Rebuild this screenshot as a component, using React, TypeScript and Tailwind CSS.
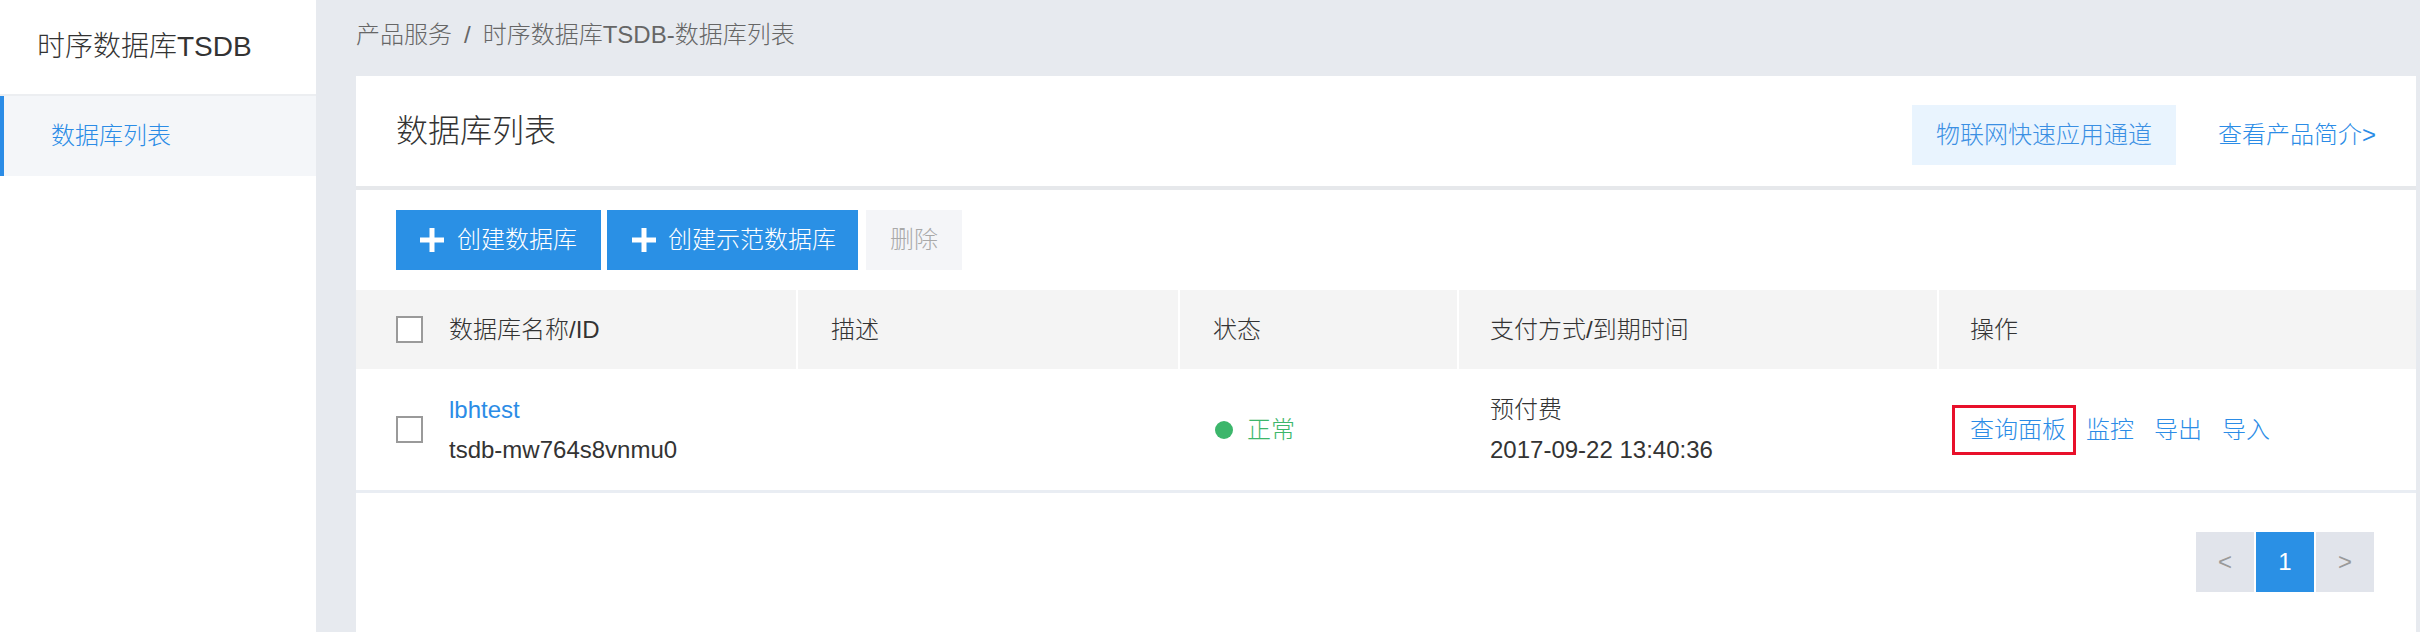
import { useState } from "react";

type Db = {
  name: string;
  id: string;
  status: string;
  pay: string;
  expire: string;
};

const rows: Db[] = [
  { name: "lbhtest", id: "tsdb-mw764s8vnmu0", status: "正常", pay: "预付费", expire: "2017-09-22 13:40:36" },
];

function PlusIcon() {
  return (
    <svg width="24" height="24" viewBox="0 0 24 24" className="shrink-0">
      <rect x="0" y="9.5" width="24" height="5" fill="#fff" />
      <rect x="9.5" y="0" width="5" height="24" fill="#fff" />
    </svg>
  );
}

function Checkbox() {
  return <span className="box-border block h-[27px] w-[27px] shrink-0 border-2 border-[#9a9a9a] bg-white" />;
}

export default function App() {
  const [page] = useState(1);

  return (
    <div
      className="flex h-[632px] w-full overflow-hidden bg-[#e7eaef] text-[24px] font-light text-[#333]"
      style={{ fontFamily: '"Liberation Sans", "Noto Sans CJK SC", sans-serif' }}
    >
      {/* sidebar */}
      <aside className="w-[316px] shrink-0 bg-white">
        <div className="flex h-[96px] items-center border-b-2 border-[#eceef1] pl-[37px] text-[28px] text-[#333]">
          时序数据库TSDB
        </div>
        <div className="flex h-[80px] items-center border-l-4 border-[#2b8ce6] bg-[#f4f6f9] pl-[47px] text-[#2b8ce6]">
          数据库列表
        </div>
      </aside>

      {/* main */}
      <main className="flex min-w-0 flex-1 flex-col pl-[40px] pr-[4px]">
        <div className="h-[76px] pt-[18px] leading-[34px] text-[#666]">
          产品服务<span className="px-[12px]">/</span>时序数据库TSDB-数据库列表
        </div>

        <div className="flex flex-1 flex-col bg-white">
          <div className="flex h-[110px] items-center justify-between px-[40px]">
            <h1 className="text-[32px] text-[#333]">数据库列表</h1>
            <div className="flex items-center gap-[42px] pt-[8px]">
              <button className="h-[60px] bg-[#e9f4fe] px-[24px] text-[#3a8fe3]">物联网快速应用通道</button>
              <a className="text-[#2b8ce6]">查看产品简介&gt;</a>
            </div>
          </div>

          <div className="h-[4px] bg-[#e6e8eb]" />

          <div className="flex items-center px-[40px] py-[20px]">
            <button className="flex h-[60px] items-center gap-[13px] bg-[#2a90e5] pl-[24px] pr-[24px] text-white">
              <PlusIcon />
              创建数据库
            </button>
            <button className="ml-[6px] flex h-[60px] items-center gap-[12px] bg-[#2a90e5] pl-[25px] pr-[22px] text-white">
              <PlusIcon />
              创建示范数据库
            </button>
            <button className="ml-[8px] h-[60px] bg-[#f4f5f8] px-[24px] text-[#a9a9a9]">删除</button>
          </div>

          <div className="grid grid-cols-[440px_382px_279px_480px_1fr]">
            <div className="flex h-[79px] items-center gap-[26px] bg-[#f4f4f4] pl-[40px]">
              <Checkbox />
              数据库名称/ID
            </div>
            <div className="flex h-[79px] items-center border-l-2 border-white bg-[#f4f4f4] pl-[33px]">描述</div>
            <div className="flex h-[79px] items-center border-l-2 border-white bg-[#f4f4f4] pl-[33px]">状态</div>
            <div className="flex h-[79px] items-center border-l-2 border-white bg-[#f4f4f4] pl-[31px]">
              支付方式/到期时间
            </div>
            <div className="flex h-[79px] items-center border-l-2 border-white bg-[#f4f4f4] pl-[31px]">操作</div>

            {rows.map((r) => (
              <div key={r.id} className="contents">
                <div className="flex h-[124px] items-center gap-[26px] border-b-[3px] border-[#e9edf3] pl-[40px]">
                  <Checkbox />
                  <div className="leading-[40px]">
                    <div className="text-[#2b8ce6]">{r.name}</div>
                    <div>{r.id}</div>
                  </div>
                </div>
                <div className="h-[124px] border-b-[3px] border-[#e9edf3]" />
                <div className="flex h-[124px] items-center gap-[14px] border-b-[3px] border-[#e9edf3] pl-[37px]">
                  <span className="h-[18px] w-[18px] rounded-full bg-[#3cb66b]" />
                  <span className="text-[#3cb66b]">{r.status}</span>
                </div>
                <div className="flex h-[124px] items-center border-b-[3px] border-[#e9edf3] pl-[33px]">
                  <div className="leading-[40px]">
                    <div>{r.pay}</div>
                    <div>{r.expire}</div>
                  </div>
                </div>
                <div className="flex h-[124px] items-center gap-[20px] border-b-[3px] border-[#e9edf3] pl-[33px] text-[#2b8ce6]">
                  <span className="relative leading-[34px]">
                    查询面板
                    <span className="absolute -bottom-[8px] -left-[18px] -right-[10px] -top-[8px] border-[3px] border-[#e8102a]" />
                  </span>
                  <span>监控</span>
                  <span>导出</span>
                  <span>导入</span>
                </div>
              </div>
            ))}
          </div>

          <div className="flex justify-end gap-[2px] pr-[42px] pt-[39px]">
            <button className="h-[60px] w-[58px] bg-[#e1e4eb] text-[#9a9a9a]">&lt;</button>
            <button className="h-[60px] w-[58px] bg-[#2a90e5] text-white">{page}</button>
            <button className="h-[60px] w-[58px] bg-[#e1e4eb] text-[#9a9a9a]">&gt;</button>
          </div>
        </div>
      </main>
    </div>
  );
}
